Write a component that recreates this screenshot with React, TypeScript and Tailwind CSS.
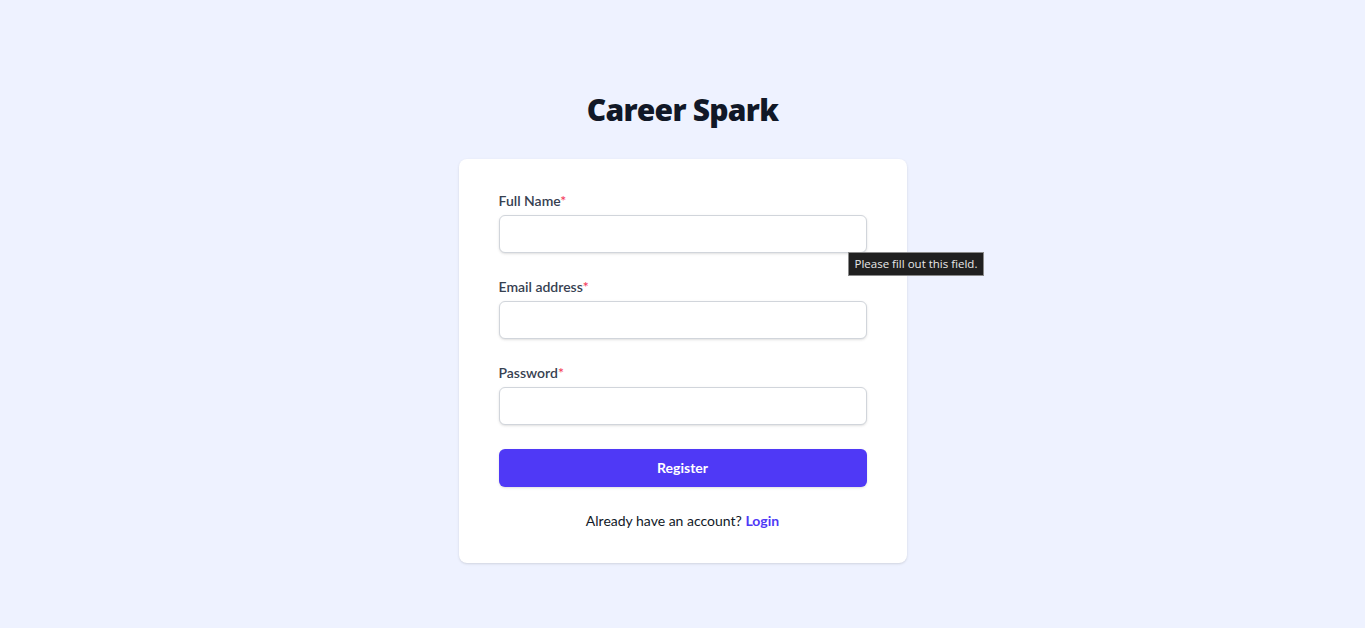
import React from "react";

function Field({ label, type, id }: { label: string; type: string; id: string }) {
  return (
    <div>
      <label htmlFor={id} className="block text-sm leading-5 font-semibold text-[#374151]">
        {label}
        <span className="text-[#f43f5e]">*</span>
      </label>
      <input
        id={id}
        type={type}
        className="mt-1 block w-full h-[38px] rounded-md border border-[#d1d5db] bg-white px-3 text-sm shadow-sm outline-none"
      />
    </div>
  );
}

export default function App() {
  return (
    <div
      className="min-h-[628px] bg-[#eef2ff] pt-[92px] pb-12"
      style={{ fontFamily: "Lato, 'Noto Sans', sans-serif" }}
    >
      <h2
        className="text-center text-3xl leading-9 font-extrabold tracking-tight text-[#111827]"
        style={{ fontFamily: "'Open Sans', sans-serif" }}
      >
        Career Spark
      </h2>

      <div className="mx-auto mt-[31px] w-[448px] rounded-lg bg-white px-10 py-8 shadow-sm">
        <form className="space-y-6" onSubmit={(e) => e.preventDefault()}>
          <div className="relative">
            <Field label="Full Name" type="text" id="name" />
            {/* native validation bubble */}
            <div className="absolute left-[349px] top-[61px] whitespace-nowrap border border-[#8a8a8a] bg-[#202020] px-[6px] py-[3px] text-xs leading-4 text-[#e8e8e8]" style={{ fontFamily: "'Open Sans', sans-serif", fontSize: "11.5px" }}>
              Please fill out this field.
            </div>
          </div>
          <Field label="Email address" type="email" id="email" />
          <Field label="Password" type="password" id="password" />

          <button
            type="submit"
            className="flex h-[38px] w-full items-center justify-center rounded-md bg-[#4f39f6] text-sm font-bold text-white shadow-sm"
          >
            Register
          </button>
        </form>

        <p className="mt-6 text-center text-sm leading-5 text-[#111827]">
          Already have an account?{" "}
          <a href="#" className="font-bold text-[#4f39f6]">
            Login
          </a>
        </p>
      </div>
    </div>
  );
}
